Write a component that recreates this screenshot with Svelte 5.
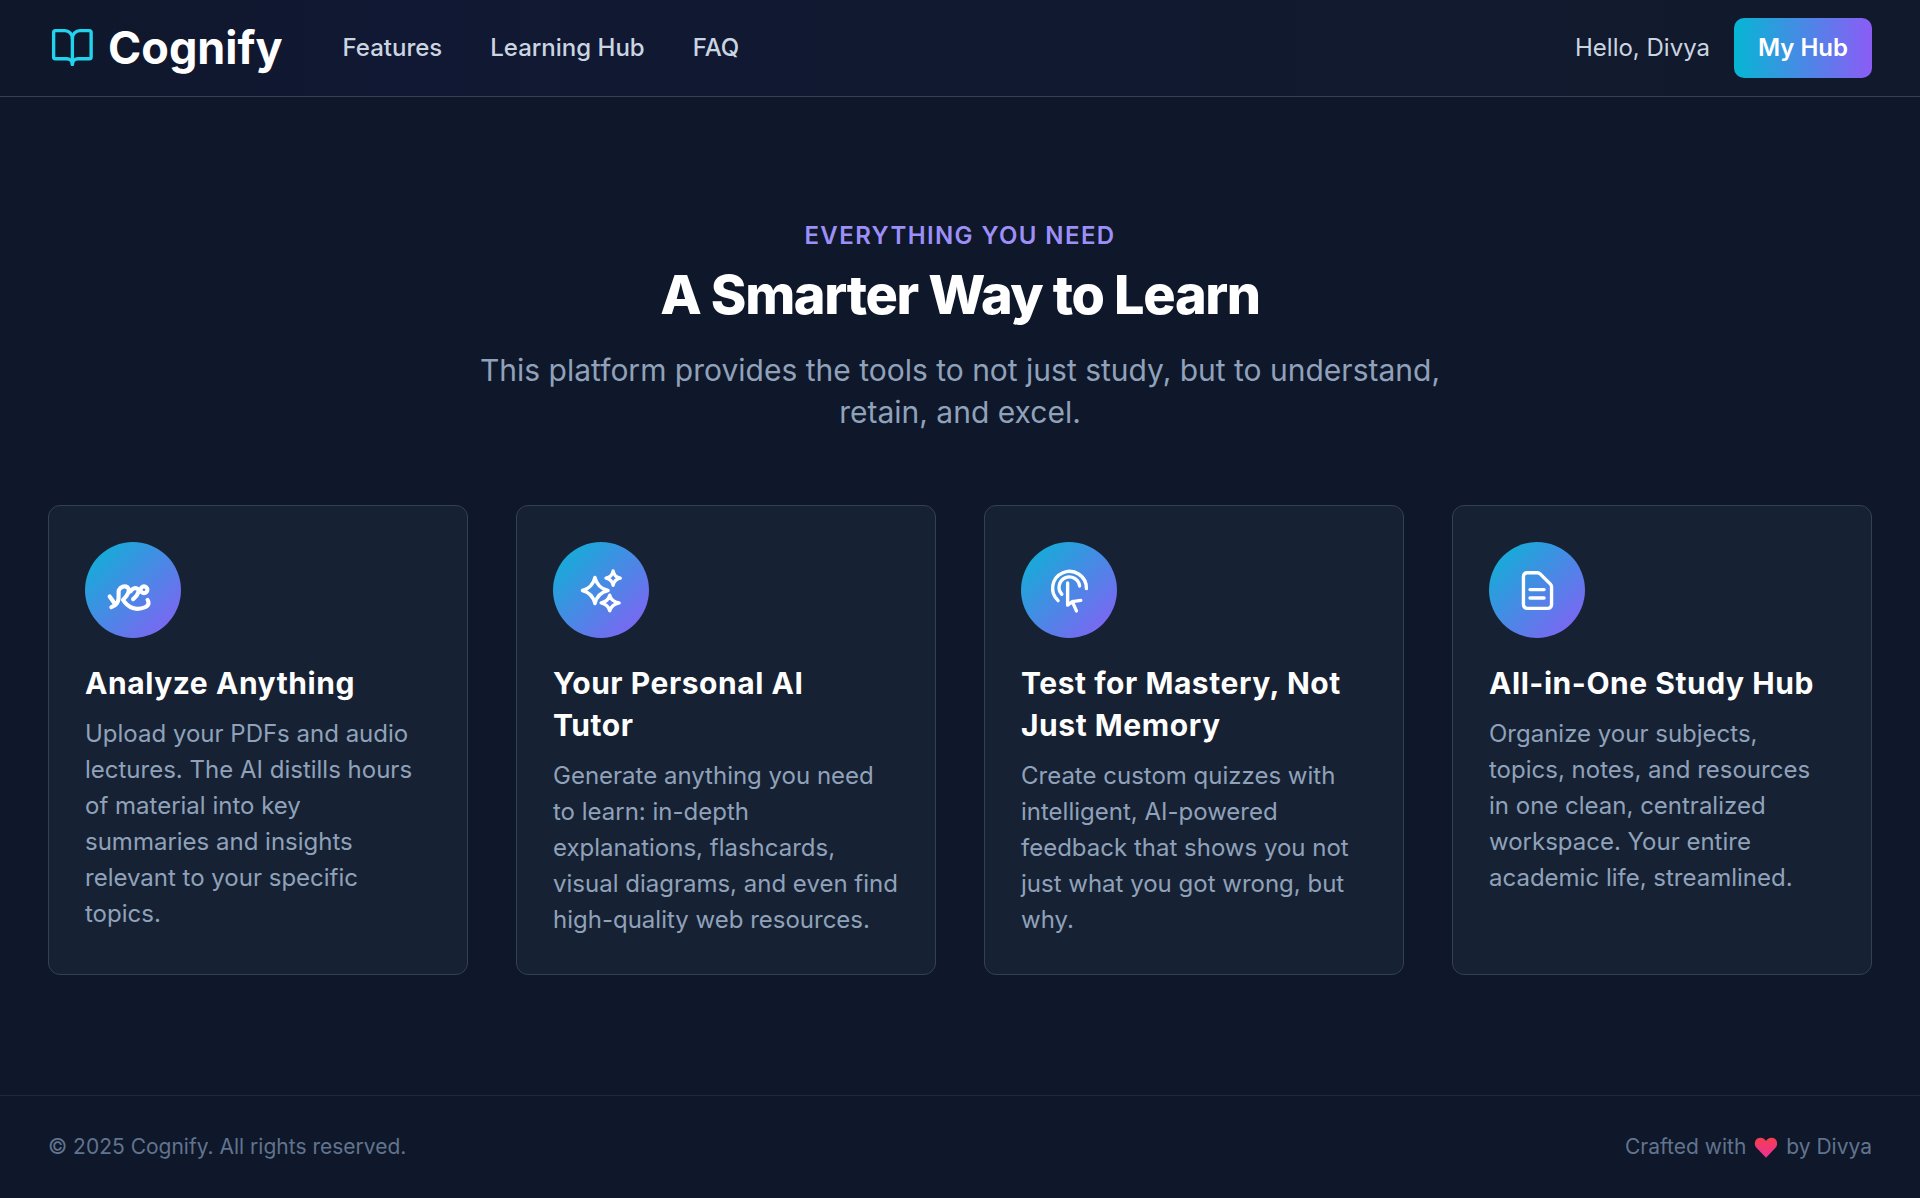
<script>
	const cards = [
		{
			icon: 'brain',
			title: 'Analyze Anything',
			text: 'Upload your PDFs and audio lectures. The AI distills hours of material into key summaries and insights relevant to your specific topics.'
		},
		{
			icon: 'sparkles',
			title: 'Your Personal AI Tutor',
			text: 'Generate anything you need to learn: in-depth explanations, flashcards, visual diagrams, and even find high-quality web resources.'
		},
		{
			icon: 'pointer',
			title: 'Test for Mastery, Not Just Memory',
			text: 'Create custom quizzes with intelligent, AI-powered feedback that shows you not just what you got wrong, but why.'
		},
		{
			icon: 'file',
			title: 'All-in-One Study Hub',
			text: 'Organize your subjects, topics, notes, and resources in one clean, centralized workspace. Your entire academic life, streamlined.'
		}
	];
</script>

<div class="page">
	<header class="navbar">
		<div class="nav-left">
			<div class="brand">
				<svg class="logo" viewBox="-1 0 24 24" fill="none" stroke="currentColor" stroke-width="1.800" stroke-linecap="round" stroke-linejoin="round">
					<path d="M12 7v14" />
					<path d="M3 18a1 1 0 0 1-1-1V4a1 1 0 0 1 1-1h5a4 4 0 0 1 4 4 4 4 0 0 1 4-4h5a1 1 0 0 1 1 1v13a1 1 0 0 1-1 1h-6a3 3 0 0 0-3 3 3 3 0 0 0-3-3z" />
				</svg>
				<span>Cognify</span>
			</div>
			<nav class="links">
				<a href="#features">Features</a>
				<a href="#hub">Learning Hub</a>
				<a href="#faq">FAQ</a>
			</nav>
		</div>
		<div class="nav-right">
			<span class="hello">Hello, Divya</span>
			<button class="hub-btn">My Hub</button>
		</div>
	</header>

	<main class="features">
		<div class="intro">
			<p class="eyebrow">EVERYTHING YOU NEED</p>
			<h1>A Smarter Way to Learn</h1>
			<p class="subtitle">This platform provides the tools to not just study, but to understand, retain, and excel.</p>
		</div>

		<div class="grid">
			{#each cards as card}
				<article class="card">
					<div class="icon-wrap">
						<svg viewBox="0 0 24 24" fill="none" stroke="currentColor" stroke-width="1.800" stroke-linecap="round" stroke-linejoin="round">
							{#if card.icon === 'brain'}
								<g class="thick">
									<path d="M-.7 15.200 1.600 18.400M.2 20.900C2.500 20 3.800 18.500 4 16.500L4.100 12C5 10 7.300 9.300 8.800 10.300 10.200 11.500 9.500 14 6.400 17" />
									<path d="M10.500 12.500C11 11 12.700 10.400 14 11 15.300 12 14.800 14 11.800 16.600" />
									<circle cx="17.600" cy="11.600" r="1.800" />
									<path d="M7 17.900C9 20.500 11.500 21.800 14 21.800 17 21.800 20 20.500 20 18.800 20 18 19.800 17.400 19.500 17" />
								</g>
							{:else if card.icon === 'sparkles'}
								<path d="M8.500 5Q9.800 10.700 15.500 12Q9.800 13.300 8.500 19Q7.200 13.300 1.800 12Q7.200 10.700 8.500 5Z" />
								<path d="M18.200 1.600Q18.800 4.800 22 5.400Q18.800 6 18.200 9.200Q17.600 6 14.400 5.400Q17.600 4.800 18.200 1.600Z" />
								<path d="M16.400 14.500Q17 17.800 21.400 18.600Q17.500 19.400 16.400 22.800Q15.500 19.400 11.800 18.600Q15.500 17.800 16.400 14.500Z" />
							{:else if card.icon === 'pointer'}
								<path d="M5.900 17.400A9 9 0 1 1 21 11" />
								<path d="M7.900 14A5.500 5.500 0 1 1 17.400 9.600" />
								<path d="M11 8V19.800L13.500 17.900 15.700 22.900M13.500 17.900 18 17.300Z" />
							{:else}
								<path d="M6.500 2.500H12A2 2 0 0 1 13.400 3.100L18.900 8.600A2 2 0 0 1 19.500 10V19.500A2 2 0 0 1 17.500 21.500H6.500A2 2 0 0 1 4.500 19.500V4.500A2 2 0 0 1 6.500 2.500Z" />
								<path d="M8 11.500H15.500M8 16H15.500" />
							{/if}
						</svg>
					</div>
					<h3>{card.title}</h3>
					<p>{card.text}</p>
				</article>
			{/each}
		</div>
	</main>

	<footer class="footer">
		<span>© 2025 Cognify. All rights reserved.</span>
		<span class="crafted">
			Crafted with
			<svg class="heart" viewBox="0 0 24 24">
				<defs>
					<linearGradient id="heartFill" x1="0" y1="0" x2="0" y2="1">
						<stop offset="0" stop-color="#f43f4e" />
						<stop offset="1" stop-color="#ec2f9b" />
					</linearGradient>
				</defs>
				<path fill="url(#heartFill)" d="M12 22 3 12.500C.5 9.800 1.500 3.500 7 3.500c2.300 0 4 1.200 5 3 1-1.800 2.700-3 5-3 5.500 0 6.500 6.300 4 9z" />
			</svg>
			by Divya
		</span>
	</footer>
</div>

<style>
	:global(body) {
		margin: 0;
		background: #0f172a;
		font-family: Inter, 'Liberation Sans', sans-serif;
	}
	.page {
		min-height: 1198px;
		display: flex;
		flex-direction: column;
		background: #0f172a;
		box-sizing: border-box;
	}

	.navbar {
		height: 97px;
		box-sizing: border-box;
		display: flex;
		align-items: center;
		justify-content: space-between;
		padding: 0 48px;
		border-bottom: 1px solid #334155;
		background: linear-gradient(90deg, #0f172a, #111833 20%, #111a2c);
	}
	.nav-left {
		display: flex;
		align-items: center;
		gap: 60px;
		margin-bottom: 2px;
	}
	.brand {
		display: flex;
		align-items: center;
		gap: 15px;
		font-size: 45px;
		font-weight: 700;
		color: #fff;
	}
	.logo {
		width: 45px;
		height: 45px;
		color: #22d3ee;
	}
	.links {
		display: flex;
		gap: 48px;
	}
	.links a {
		color: #cbd5e1;
		font-size: 24px;
		font-weight: 500;
		text-decoration: none;
	}
	.nav-right {
		display: flex;
		align-items: center;
		gap: 24px;
	}
	.hello {
		color: #cbd5e1;
		font-size: 24px;
		margin-bottom: 2px;
	}
	.hub-btn {
		height: 60px;
		width: 138px;
		padding: 0 0 2px;
		border: none;
		border-radius: 10px;
		background: linear-gradient(90deg, #06b6d4, #8b5cf6);
		color: #fff;
		font-family: inherit;
		font-size: 24px;
		font-weight: 600;
	}

	.features {
		padding: 123px 48px 120px;
	}
	.intro {
		text-align: center;
		margin-bottom: 72px;
	}
	.eyebrow {
		margin: 0;
		color: #9d8ff8;
		font-size: 24px;
		line-height: 32px;
		font-weight: 600;
		letter-spacing: 1.4px;
	}
	h1 {
		margin: 7px 0 0;
		color: #fff;
		font-size: 54px;
		line-height: 72px;
		font-weight: 800;
		letter-spacing: -1.35px;
	}
	.subtitle {
		max-width: 1008px;
		margin: 18px auto 0;
		color: #90a2ba;
		font-size: 30px;
		line-height: 42px;
	}

	.grid {
		display: grid;
		grid-template-columns: repeat(4, 1fr);
		gap: 48px;
	}
	.card {
		box-sizing: border-box;
		height: 470px;
		padding: 36px;
		background: #162133;
		border: 1px solid #334155;
		border-radius: 12px;
	}
	.icon-wrap {
		width: 96px;
		height: 96px;
		display: flex;
		align-items: center;
		justify-content: center;
		border-radius: 50%;
		background: linear-gradient(135deg, #06b6d4, #8b5cf6);
		color: #fff;
	}
	.icon-wrap svg {
		width: 45px;
		height: 45px;
		overflow: visible;
	}
	.thick {
		stroke-width: 2.200;
	}
	h3 {
		max-width: 332px;
		margin: 24px 0 0;
		color: #fff;
		font-size: 30px;
		line-height: 42px;
		font-weight: 700;
		letter-spacing: 0.55px;
	}
	.card p {
		margin: 12px 0 0;
		color: #90a2ba;
		font-size: 24px;
		line-height: 36px;
	}

	.footer {
		margin-top: auto;
		height: 103px;
		box-sizing: border-box;
		display: flex;
		align-items: center;
		justify-content: space-between;
		padding: 0 48px 1px;
		border-top: 1px solid #1e293b;
		color: #61748e;
		font-size: 21px;
	}
	.crafted {
		display: flex;
		align-items: center;
		gap: 7px;
	}
	.heart {
		width: 26px;
		height: 26px;
	}
</style>
